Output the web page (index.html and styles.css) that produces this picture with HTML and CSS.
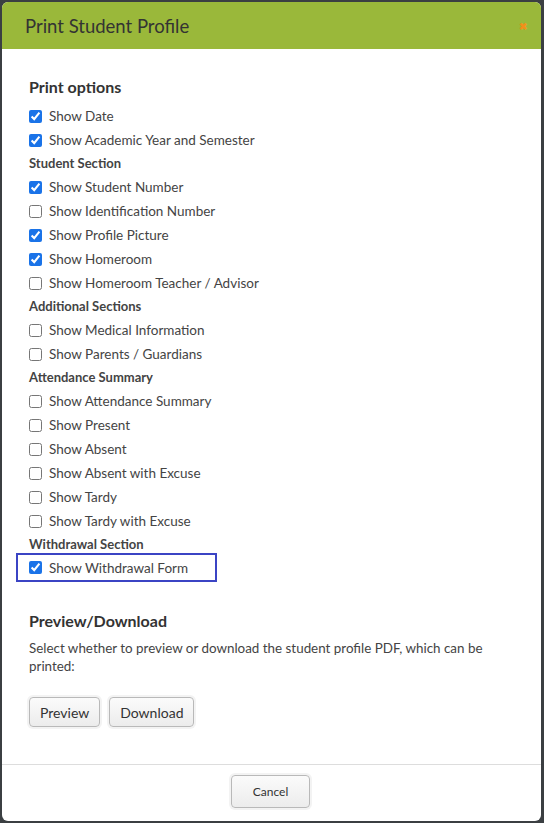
FILE: index.html
```html
<!DOCTYPE html>
<html lang="en">
<head>
    <meta charset="UTF-8">
    <meta name="viewport" content="width=device-width, initial-scale=1.0">
    <title>Print Student Profile</title>
    <link rel="stylesheet" href="styles.css">
</head>
<body>
    <div class="modal">
        <div class="modal-header">
            <h2>Print Student Profile</h2>
            <span class="close">&#10006;</span>
        </div>
        <div class="modal-body">
            <h3>Print options</h3>
            <label class="option"><input type="checkbox" checked> Show Date</label>
            <label class="option"><input type="checkbox" checked> Show Academic Year and Semester</label>

            <div class="section">Student Section</div>
            <label class="option"><input type="checkbox" checked> Show Student Number</label>
            <label class="option"><input type="checkbox"> Show Identification Number</label>
            <label class="option"><input type="checkbox" checked> Show Profile Picture</label>
            <label class="option"><input type="checkbox" checked> Show Homeroom</label>
            <label class="option"><input type="checkbox"> Show Homeroom Teacher / Advisor</label>

            <div class="section">Additional Sections</div>
            <label class="option"><input type="checkbox"> Show Medical Information</label>
            <label class="option"><input type="checkbox"> Show Parents / Guardians</label>

            <div class="section">Attendance Summary</div>
            <label class="option"><input type="checkbox"> Show Attendance Summary</label>
            <label class="option"><input type="checkbox"> Show Present</label>
            <label class="option"><input type="checkbox"> Show Absent</label>
            <label class="option"><input type="checkbox"> Show Absent with Excuse</label>
            <label class="option"><input type="checkbox"> Show Tardy</label>
            <label class="option"><input type="checkbox"> Show Tardy with Excuse</label>

            <div class="section">Withdrawal Section</div>
            <label class="option highlighted"><input type="checkbox" checked> Show Withdrawal Form</label>

            <h3 class="download-title">Preview/Download</h3>
            <p class="hint">Select whether to preview or download the student profile PDF, which can be printed:</p>
            <div class="actions">
                <button>Preview</button>
                <button>Download</button>
            </div>
        </div>
        <div class="modal-footer">
            <button class="cancel">Cancel</button>
        </div>
    </div>
</body>
</html>
```

FILE: styles.css
```css
body {
    margin: 0;
    background: #3b3f42;
    font-family: Lato, "Open Sans", Arial, sans-serif;
    color: #444;
}

.modal {
    margin: 2px;
    width: 539px;
    height: 819px;
    background: #fff;
    border-radius: 6px;
    overflow: hidden;
    display: flex;
    flex-direction: column;
}

.modal-header {
    height: 47px;
    background: #9ab83a;
    display: flex;
    align-items: center;
    justify-content: space-between;
    padding: 0 14px 0 23px;
}

.modal-header h2 {
    margin: 0;
    font-size: 18.5px;
    font-weight: normal;
    color: #333;
}

.close {
    color: #f0901a;
    font-size: 10px;
    font-weight: bold;
}

.modal-body {
    flex: 1;
    padding: 27px 27px 0;
}

.modal-body h3 {
    margin: 0 0 6px;
    font-size: 16px;
    line-height: 22px;
    color: #333;
}

.option {
    display: flex;
    align-items: center;
    height: 24px;
    font-size: 13.5px;
    color: #444;
}

.option input {
    width: 13px;
    height: 13px;
    margin: 0 7px 0 0;
    accent-color: #1a73e8;
}

.section {
    height: 23px;
    line-height: 23px;
    font-size: 13px;
    font-weight: bold;
    color: #444;
}

.highlighted {
    width: 186px;
    height: 25px;
    margin-top: -3px;
    margin-left: -13px;
    padding-left: 11px;
    border: 2px solid #3b44c4;
}

.modal-body .download-title {
    margin-top: 28px;
    margin-bottom: 7px;
}

.hint {
    margin: 0 0 22px;
    font-size: 13.4px;
    line-height: 18px;
    color: #444;
}

.actions {
    display: flex;
    gap: 9px;
}

button {
    font-family: Lato, Arial, sans-serif;
    font-size: 14px;
    color: #333;
    background: linear-gradient(#fbfbfb, #ececec);
    border: 1px solid #b9b9b9;
    border-radius: 4px;
    box-shadow: 0 0 0 2px #f3f3f3;
    height: 30px;
    padding: 0 10px;
}

.modal-footer {
    border-top: 1px solid #ddd;
    height: 57px;
    display: flex;
    justify-content: center;
    align-items: flex-start;
    padding-top: 10px;
    box-sizing: border-box;
}

.cancel {
    font-size: 12px;
    width: 79px;
    height: 33px;
    margin-left: -2px;
}
```
